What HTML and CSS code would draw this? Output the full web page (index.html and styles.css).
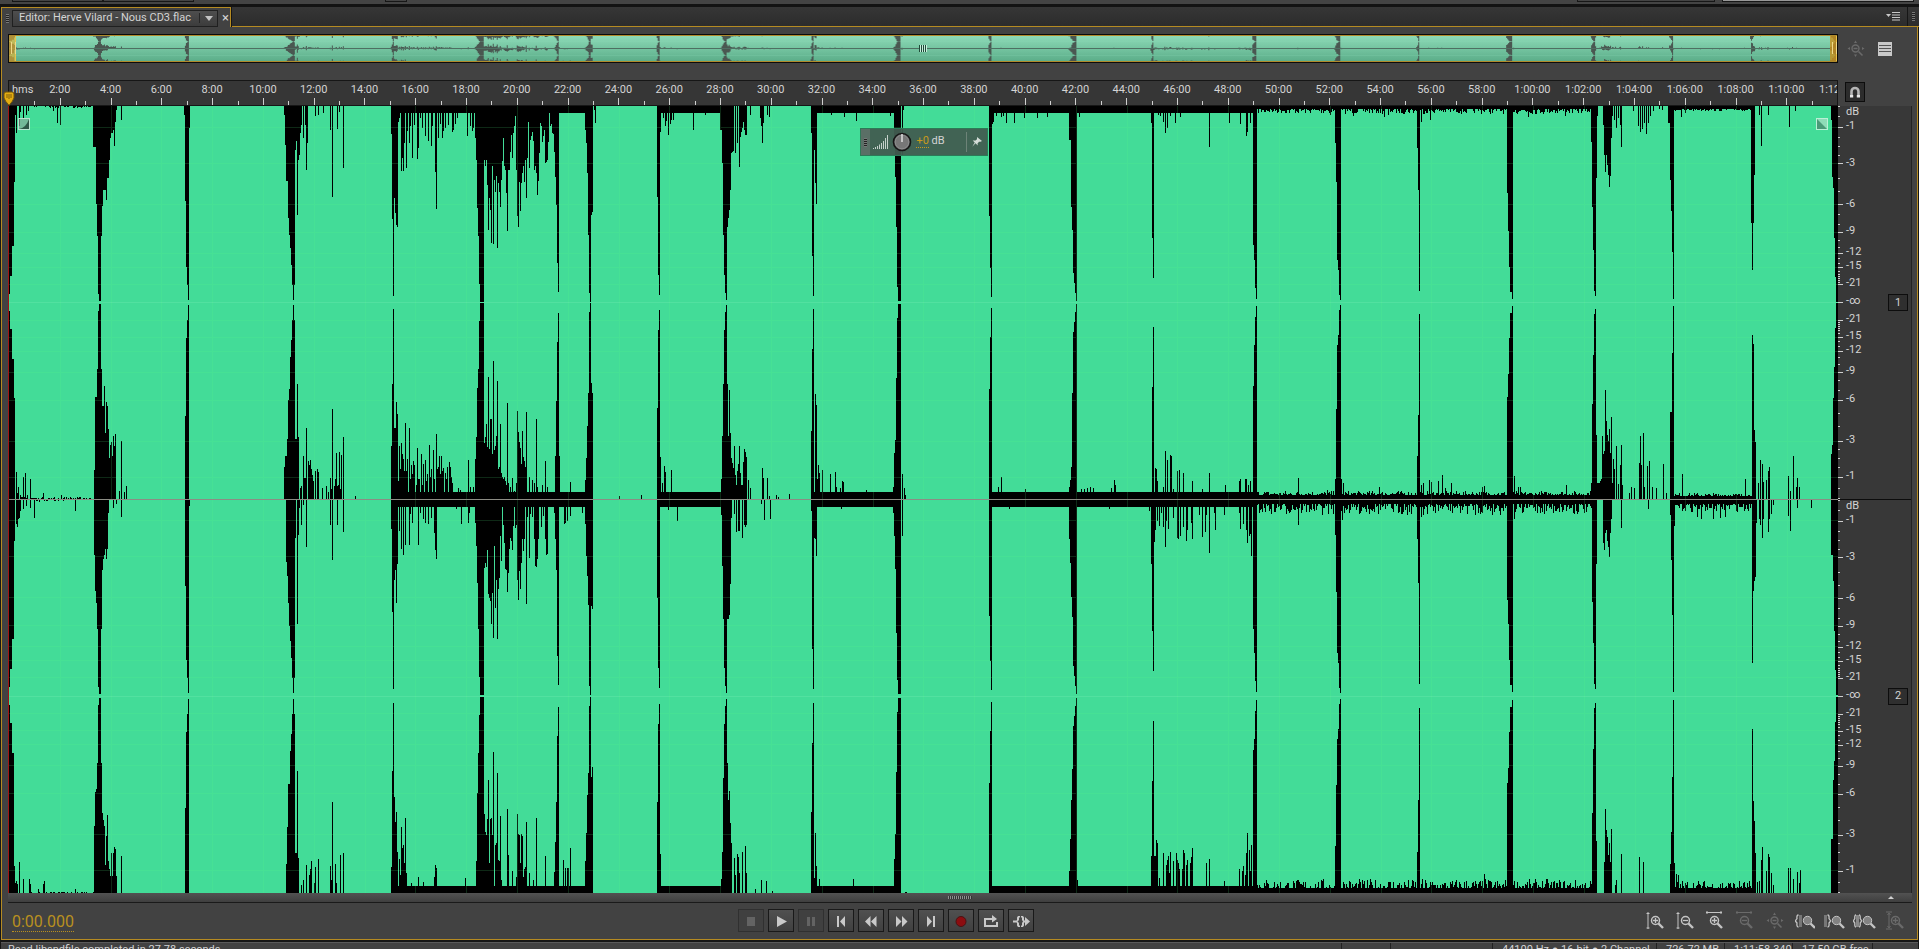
FILE: index.html
```html
<!DOCTYPE html>
<html lang="en">
<head>
<meta charset="utf-8">
<title>Editor: Herve Vilard - Nous CD3.flac</title>
<link rel="stylesheet" href="styles.css">
</head>
<body>
<svg class="defs" aria-hidden="true">
  <symbol id="lens" viewBox="0 0 14 14"><circle cx="5.500" cy="5.500" r="4" fill="none" stroke="currentColor" stroke-width="1.500"/><path d="M8.500 8.500l4.500 4.500" stroke="currentColor" stroke-width="2.400"/></symbol>
  <symbol id="lens-solid" viewBox="0 0 14 14"><circle cx="5.500" cy="5.500" r="4.200" fill="#828282" stroke="currentColor"/><path d="M8.500 8.500l4.500 4.500" stroke="currentColor" stroke-width="2.400"/></symbol>
  <symbol id="zoom-full" viewBox="0 0 18 18"><circle cx="8.500" cy="8.500" r="3.500" fill="none" stroke="currentColor" stroke-width="1.400"/><path d="M6.500 8.500h4M11.500 11.500l4 4" stroke="currentColor" stroke-width="1.600"/><path d="M7 3l1.500-2.500L10 3zM7 14.500h3L8.500 17zM3 7v3L.5 8.500zM15 7v3l2.500-1.500z" fill="currentColor"/></symbol>
</svg>

<div class="upper-edge"><i class="slot slot-a"></i><i class="slot slot-b"></i><i class="slot slot-c"></i><i class="slot slot-d"></i><i class="slot slot-e"></i></div>

<header class="tabs">
  <div class="tab">
    <i class="grip"></i>
    <button class="tab-name" type="button"><span>Editor: Herve Vilard - Nous CD3.flac</span><i class="caret"></i></button>
    <button class="close" type="button" aria-label="Close">×</button>
  </div>
  <div class="tab-rest">
    <button class="menu" type="button" aria-label="Panel menu"><svg width="14" height="9" viewBox="0 0 14 9"><path d="M0 2h5L2.500 5z" fill="#c8c8c8"/><path d="M6 .5h8M6 3h8M6 5.500h8M6 8h8" stroke="#c8c8c8"/></svg></button>
    <span class="tab-end"><i class="grip"></i></span>
  </div>
</header>

<main class="panel">
  <div class="overview-row">
    <div class="overview">
      <svg class="overview-wave" viewBox="9 106 1829 787" preserveAspectRatio="none"><path class="wave-shape"/><path d="M9 499H1838" stroke="#4e6f62" stroke-width="26"/><path d="M9 302H1838M9 696H1838" stroke="#8fdcbb" stroke-opacity=".4" stroke-width="20"/></svg>
      <i class="handle"></i>
      <i class="dots"></i>
      <i class="handle handle-end"></i>
    </div>
    <div class="overview-tools">
      <button class="bare dim" type="button" aria-label="Zoom out full"><svg width="18" height="18"><use href="#zoom-full"/></svg></button>
      <button class="bare" type="button" aria-label="Toggle view"><svg width="14" height="14" viewBox="0 0 14 14"><rect width="14" height="14" fill="#c9c9c9"/><path d="M1 3.500h12M1 6.500h12M1 9.500h12" stroke="#555"/></svg></button>
    </div>
  </div>

  <div class="ruler-row">
    <div class="ruler" id="ruler"><span class="unit">hms</span></div>
    <button class="magnet" type="button" aria-label="Snapping"><svg width="12" height="12" viewBox="0 0 12 12"><path d="M2.500 9V5.500a3.500 3.500 0 0 1 7 0V9" fill="none" stroke="#b5b5b5" stroke-width="2.600"/><path d="M1 9h3.200v2.500H1zM7.800 9H11v2.500H7.800z" fill="#e6e6e6"/></svg></button>
    <svg class="playhead" width="12" height="15" viewBox="0 0 12 15"><path d="M1 3q0-2 2-2h6q2 0 2 2v4q-1 3-5 7.500Q2 10 1 7z" fill="#e3ac12" stroke="#6f520a"/><path d="M4 3v4M6 3v5M8 3v4" stroke="#7c5c0b"/></svg>
  </div>

  <div class="wave-row">
    <div class="wave">
      <svg class="wave-svg" viewBox="9 106 1829 787" preserveAspectRatio="none" shape-rendering="crispEdges">
        <path class="wave-shape"/>
        <path class="grid" id="grid"/>
        <path class="zero" d="M9 302.500H1838M9 696.500H1838"/>
        <path class="divide" d="M9 499H1838"/>
      </svg>
      <svg class="fade" width="12" height="12" viewBox="0 0 12 12"><rect x=".5" y=".5" width="11" height="11" fill="#86aa98" fill-opacity=".7" stroke="#b9e3cf"/><path d="M1 11Q8 10 11 1V11z" fill="#2e5746"/></svg>
      <svg class="fade fade-end" width="12" height="12" viewBox="0 0 12 12"><rect x=".5" y=".5" width="11" height="11" fill="#8edcb8" stroke="#b9f0d6"/><path d="M1 1L11 11H1z" fill="#4a9a78"/></svg>
      <div class="hud">
        <span class="hud-grip"><i class="grip"></i></span>
        <svg width="16" height="14" viewBox="0 0 16 14"><path d="M.5 14v-1M2.500 14v-2M4.500 14v-3M6.500 14v-4.500M8.500 14V8M10.500 14V6M12.500 14V3M14.500 14V0" stroke="#c4d0ca"/></svg>
        <svg width="20" height="20" viewBox="0 0 20 20"><circle cx="10" cy="10" r="8.500" fill="#6c6c6c" stroke="#161616" stroke-width="1.600"/><circle cx="10" cy="10" r="6.800" fill="#777" stroke="#8d8d8d"/><path d="M10 2v8" stroke="#eee" stroke-width="1.300"/></svg>
        <span class="gain"><a href="#gain">+0</a> dB</span>
        <button class="pin" type="button" aria-label="Pin"><svg width="10" height="10" viewBox="0 0 10 10"><path d="M5 0l5 4-1.500.7-1.500 0L5.500 6.500 5.800 8.500 3.500 6.300.3 9.700 2.700 5.500.7 3.500 3.500 3.600 5 2.200z" fill="#d3dcd7"/></svg></button>
      </div>
    </div>
    <div class="scales">
      <div class="scale"><svg class="ticks" viewBox="0 0 5 393" preserveAspectRatio="none" shape-rendering="crispEdges"><path class="tick-path"/></svg><ul class="levels"></ul><button class="channel" type="button">1</button></div>
      <div class="scale"><svg class="ticks" viewBox="0 0 5 393" preserveAspectRatio="none" shape-rendering="crispEdges"><path class="tick-path"/></svg><ul class="levels"></ul><button class="channel" type="button">2</button></div>
    </div>
  </div>

  <div class="splitter"><i class="splitter-grip"></i><i class="splitter-up"></i></div>

  <div class="controls">
    <div class="time"><a href="#time">0:00.000</a></div>
    <div class="transport">
      <button class="key off" type="button" aria-label="Stop"><svg viewBox="0 0 24 20"><path d="M8 6h8v9H8z"/></svg></button>
      <button class="key" type="button" aria-label="Play"><svg viewBox="0 0 24 20"><path d="M8 5l10 5.500L8 16z"/></svg></button>
      <button class="key off" type="button" aria-label="Pause"><svg viewBox="0 0 24 20"><path d="M8 6h3v9H8zM13 6h3v9h-3z"/></svg></button>
      <button class="key" type="button" aria-label="Previous"><svg viewBox="0 0 24 20"><path d="M8 5h2v11H8zM16 5v11l-5-5.500z"/></svg></button>
      <button class="key" type="button" aria-label="Rewind"><svg viewBox="0 0 24 20"><path d="M11.500 5v11L6 10.500zM17.500 5v11L12 10.500z"/></svg></button>
      <button class="key" type="button" aria-label="Fast forward"><svg viewBox="0 0 24 20"><path d="M7 5v11l5.500-5.500zM13 5v11l5.500-5.500z"/></svg></button>
      <button class="key" type="button" aria-label="Next"><svg viewBox="0 0 24 20"><path d="M8 5v11l5-5.500zM14 5h2v11h-2z"/></svg></button>
      <button class="key" type="button" aria-label="Record"><svg viewBox="0 0 24 20"><circle class="rec" cx="12" cy="10.500" r="5"/></svg></button>
      <button class="key" type="button" aria-label="Loop"><svg viewBox="0 0 24 20"><path d="M5 7h8V4l5 4-5 3.500V9H7v5h10v-3h2v5H5z"/></svg></button>
      <button class="key" type="button" aria-label="Skip selection"><svg viewBox="0 0 24 20"><path d="M4 9.500h4v2H4zM9 5h2v1.500h-1V9l-1.500 1.500L10 12v2.500h1V16H9l-1-1.500V12L6.500 10.500 8 9V6.500zM12 5h2l1 1.500V9l1 1.500-1 1.500v2.500L14 16h-2v-1.500h1V12l1-1.500L13 9V6.500h-1zM16 6l5 4.500-5 4.500v-3.500h-1v-2h1z"/></svg></button>
    </div>
    <div class="zooms">
      <button class="bare" type="button" aria-label="Zoom in amplitude"><svg width="18" height="20" viewBox="0 0 18 20"><path d="M2 1v17M.5 2.500h3M.5 17h3" stroke="currentColor" fill="none"/><use href="#lens" x="4" y="4" width="14" height="14"/><path d="M7 9.500h5M9.500 7v5" stroke="currentColor" stroke-width="1.300"/></svg></button>
      <button class="bare" type="button" aria-label="Zoom out amplitude"><svg width="18" height="20" viewBox="0 0 18 20"><path d="M2 1v17M.5 2.500h3M.5 17h3" stroke="currentColor" fill="none"/><use href="#lens" x="4" y="4" width="14" height="14"/><path d="M7 9.500h5" stroke="currentColor" stroke-width="1.300"/></svg></button>
      <button class="bare" type="button" aria-label="Zoom in time"><svg width="20" height="20" viewBox="0 0 20 20"><path d="M1 1.500h16M2 0v3M16 0v3" stroke="currentColor"/><use href="#lens" x="4" y="4" width="14" height="14"/><path d="M7 9.500h5M9.500 7v5" stroke="currentColor" stroke-width="1.300"/></svg></button>
      <button class="bare dim" type="button" aria-label="Zoom out time"><svg width="20" height="20" viewBox="0 0 20 20"><path d="M1 1.500h16M2 0v3M16 0v3" stroke="currentColor"/><use href="#lens" x="4" y="4" width="14" height="14"/><path d="M7 9.500h5" stroke="currentColor" stroke-width="1.300"/></svg></button>
      <button class="bare dim" type="button" aria-label="Zoom out full"><svg width="18" height="18"><use href="#zoom-full"/></svg></button>
      <button class="bare" type="button" aria-label="Zoom to in point"><svg width="20" height="20" viewBox="0 0 20 20"><path d="M3.500 4q-2 0-1.500 3.500L.3 10 2 12q-.5 4 1.500 4" fill="none" stroke="currentColor" stroke-width="1.300"/><path d="M4 4h3v12H4z" fill="#777"/><use href="#lens-solid" x="7" y="4" width="14" height="14"/></svg></button>
      <button class="bare" type="button" aria-label="Zoom to out point"><svg width="22" height="20" viewBox="0 0 22 20"><path d="M0 4h3v12H0z" fill="#777"/><path d="M3.500 4q2 0 1.500 3.500L6.700 10 5 12q.5 4-1.500 4" fill="none" stroke="currentColor" stroke-width="1.300"/><use href="#lens-solid" x="7" y="4" width="14" height="14"/></svg></button>
      <button class="bare" type="button" aria-label="Zoom to selection"><svg width="24" height="20" viewBox="0 0 24 20"><path d="M3 4q-1.500 0-1.200 3.500L.3 10 1.800 12q-.3 4 1.200 4M6 4q1.500 0 1.200 3.500L8.700 10 7.200 12q.3 4-1.200 4" fill="none" stroke="currentColor" stroke-width="1.300"/><path d="M3 4h3v12H3z" fill="#888"/><use href="#lens-solid" x="9" y="4" width="14" height="14"/></svg></button>
      <button class="bare dim" type="button" aria-label="Zoom track"><svg width="18" height="20" viewBox="0 0 18 20"><path d="M3 3v13M0 1h6M0 18h6M1.500 4L3 2l1.500 2M1.500 15L3 17l1.500-2" stroke="currentColor" fill="none"/><use href="#lens" x="4" y="4" width="14" height="14"/><path d="M7 9.500h5M9.500 7v5" stroke="currentColor" stroke-width="1.300"/></svg></button>
    </div>
  </div>
</main>

<footer class="status">
  <span class="message">Read libsndfile completed in 27.78 seconds</span>
  <span class="cell cell-small"></span>
  <span class="cell cell-wide"></span>
  <span class="cell cell-format">44100 Hz ● 16-bit ● 2 Channel</span>
  <span class="cell cell-size">726.72 MB</span>
  <span class="cell cell-size">1:11:58.340</span>
  <span class="cell cell-free">17.50 GB free</span>
  <span class="cell cell-last"></span>
</footer>
<script src="wave.js"></script>
</body>
</html>
```
FILE: styles.css
```css
* { box-sizing: border-box; }
body {
  margin: 0;
  height: 100vh;
  overflow: hidden;
  display: flex;
  flex-direction: column;
  background: #161616;
  color: #d4d4d4;
  font: 11px/14px Roboto, "Open Sans", sans-serif;
}
button { font: inherit; color: inherit; background: none; border: 0; padding: 0; margin: 0; }
svg { display: block; }
ul { list-style: none; margin: 0; padding: 0; }
.defs { position: absolute; width: 0; height: 0; }

.upper-edge { flex: none; height: 7px; background: #444; border-bottom: 3px solid #131313; display: flex; }
.slot { height: 2px; border: solid #171717; border-width: 0 1px 1px; }
.slot-a { width: 91px; margin-left: 12px; }
.slot-b { width: 91px; }
.slot-c { width: 22px; margin-left: 191px; }
.slot-d { width: 138px; margin-left: auto; }
.slot-e { width: 192px; margin: 0 5px 0 7px; background: #999; }

.tabs { flex: none; height: 20px; display: flex; }
.tab {
  margin-left: 1px;
  padding: 1px 2px 0 4px;
  display: flex;
  align-items: center;
  background: #424242;
  border: solid #b58b22;
  border-width: 1px 1px 0;
}
.grip { width: 3px; height: 9px; background: repeating-linear-gradient(#777 0 1px, #222 1px 2px); }
.tab-name {
  height: 17px;
  margin: 0 4px 0 3px;
  padding: 0 0 0 6px;
  display: flex;
  align-items: center;
  background: linear-gradient(#4e4e4e, #3c3c3c);
  border: 1px solid #202020;
}
.caret { width: 18px; height: 10px; margin-left: 8px; border-left: 1px solid #262626; position: relative; }
.caret::after { content: ""; position: absolute; left: 5px; top: 3px; border: 4px solid transparent; border-top: 5px solid #c4c4c4; border-bottom: 0; }
.close { width: 6px; font-size: 13px; line-height: 14px; }
.tab-rest {
  flex: 1;
  margin-left: 1px;
  display: flex;
  justify-content: flex-end;
  align-items: center;
  background: linear-gradient(#363636, #2c2c2c);
  border-bottom: 1px solid #b58b22;
}
.menu { margin-right: 7px; }
.tab-end { height: 19px; padding: 0 4px; border-left: 1px solid #161616; display: flex; align-items: center; }

.panel {
  flex: 1;
  min-height: 0;
  margin: 0 1px 2px;
  padding: 7px 5px 0 6px;
  display: flex;
  flex-direction: column;
  background: #424242;
  border: solid #b58b22;
  border-width: 0 1px 1px;
}
.overview-row, .ruler-row, .wave-row { display: grid; grid-template-columns: minmax(0, 1fr) 74px; }
.overview-row { height: 29px; margin-bottom: 17px; }
.overview {
  position: relative;
  border: 1px solid #0c0c0c;
  background: linear-gradient(#8fdcb9, #5aac88);
  display: flex;
  justify-content: space-between;
  align-items: center;
}
.overview::after { content: ""; position: absolute; inset: 0; border: solid #b08a2a; border-width: 1px 0; }
.overview-wave { position: absolute; inset: 0; width: 100%; height: 100%; }
.overview-wave .wave-shape { fill: #4a5751; }
.handle { position: relative; width: 7px; height: 27px; background: #e0b032aa; border-right: 1px solid #e9c34c; }
.handle::after { content: ""; position: absolute; left: 2px; top: 7px; width: 3px; height: 12px; border: solid #efd98a; border-width: 0 1px; }
.handle-end { background: #c8901ccc; }
.dots { position: relative; width: 8px; height: 7px; background: repeating-linear-gradient(90deg, #1f4a38 0 1px, #c9efdd 1px 2px); }
.overview-tools { display: flex; align-items: center; gap: 13px; padding-left: 9px; }
.bare { color: #c4c4c4; }
.dim { color: #6a6a6a; }

.ruler-row { height: 26px; position: relative; }
.ruler { display: flex; overflow: hidden; background: #363636; border: 1px solid #161616; }
.unit { flex: 0 0 1.389%; padding: 2px 0 0 3px; white-space: nowrap; }
.mark { flex: 0 0 2.778%; padding-top: 2px; display: flex; justify-content: center; position: relative; white-space: nowrap; }
.mark::before, .mark::after { content: ""; position: absolute; bottom: 0; width: 1px; background: #cfcfcf; }
.mark::before { left: 0; height: 4px; }
.mark::after { left: 50%; height: 7px; }
.playhead { position: absolute; left: -5px; bottom: 0; }
.magnet { width: 20px; height: 20px; margin: 2px 0 0 7px; background: #2c2c2c; border: 1px solid #0d0d0d; display: grid; place-items: center; }

.wave-row { flex: 1; min-height: 0; }
.wave { position: relative; min-height: 0; background: #43dc98; border-left: 1px solid #a01414; }
.wave-svg { position: absolute; inset: 0; width: 100%; height: 100%; }
.wave-shape { fill: #000; }
.grid { stroke: #5f8; stroke-opacity: .16; fill: none; }
.zero { stroke: #b4ffd6; stroke-opacity: .14; }
.divide { stroke: #8c8c84; }
.fade { position: absolute; left: 9px; top: 12px; }
.fade-end { left: auto; right: 10px; }
.hud {
  position: absolute;
  left: 46.550%;
  top: 22px;
  width: 128px;
  height: 28px;
  display: flex;
  align-items: center;
  background: #415c50f2;
  border: 1px solid #2c7a58;
}
.hud-grip { align-self: stretch; width: 9px; margin-right: 3px; display: grid; place-items: center; background: #5a6f66; }
.hud svg + svg { margin-left: 3px; }
.gain { margin: 0 auto 2px 4px; white-space: nowrap; }
.gain a { color: #c99a1c; text-decoration: none; border-bottom: 1px dotted #c99a1c; }
.pin { height: 20px; padding: 0 5px; border-left: 1px solid #6d8378; }

.scales { display: grid; grid-template-rows: 1fr 1fr; background: #383838; border-right: 1px solid #222; }
.scale { position: relative; display: flex; min-height: 0; }
.scale + .scale { box-shadow: 0 -1px #0c0c0c; }
.ticks { width: 5px; height: 100%; }
.tick-path { stroke: #cfcfcf; }
.levels { flex: 1; display: flex; flex-direction: column; padding-left: 3px; }
.levels li { flex: 1 1 0; display: flex; align-items: flex-end; line-height: 0; min-height: 0; }
.channel { align-self: center; width: 20px; height: 17px; margin-right: 3px; background: #2f2f2f; border: 1px solid #0d0d0d; }

.splitter { position: relative; height: 10px; display: flex; align-items: center; justify-content: flex-end; background: linear-gradient(#525252, #3f3f3f); border-bottom: 1px solid #1a1a1a; }
.splitter-grip { position: absolute; left: 49.350%; width: 24px; height: 3px; background: repeating-linear-gradient(90deg, #8f8f8f 0 1px, #333 1px 2px); }
.splitter-up { width: 0; height: 0; margin-right: 18px; border: 3px solid transparent; border-bottom-color: #d0d0d0; border-top: 0; }

.controls { flex: none; height: 36px; display: flex; align-items: center; padding-bottom: 1px; }
.time { flex: 0 0 38.350%; padding: 2px 0 0 4px; font-size: 16px; line-height: 17px; }
.time a { color: #b9901f; text-decoration: none; border-bottom: 1px dotted #b9901f; }
.transport { display: flex; gap: 4px; }
.key { width: 26px; height: 23px; display: grid; place-items: center; background: linear-gradient(#505050, #404040); border: 1px solid #191919; }
.key svg { width: 24px; height: 20px; fill: #c9c9c9; }
.off { background: #404040; border-color: #303030; }
.off svg { fill: #636363; }
.key .rec { fill: #8c0d10; stroke: #4b1213; }
.zooms { margin-left: auto; padding-right: 2px; display: flex; }
.zooms .bare { width: 30px; height: 22px; display: grid; place-items: center; }

.status { flex: none; height: 7px; margin: 0 1px; overflow: hidden; display: flex; background: #424242; border-top: 1px solid #5a5a5a; white-space: nowrap; }
.message { flex: 1; padding-left: 7px; }
.cell { border-left: 1px solid #222; padding-left: 9px; min-height: 14px; }
.cell-small { width: 49px; }
.cell-wide { width: 102px; }
.cell-format { width: 164px; }
.cell-size { width: 68px; }
.cell-free { width: 80px; }
.cell-last { width: 46px; }
```
FILE: wave.js
```js
// Each entry is x,depth[,width]: a silent bar reaching from a channel's edge toward its centre.
const gaps = `9,140,5 9,170,3 9,188,1 97,130,5 98,188,3 99,195,2 186,161,3 187,179,2 188,194 290,142,5 291,159,4 292,179,3 293,194
392,113,2 393,190 394,71,2 478,130,6 479,178,5 480,196,4 557,157,2 558,186 588,106,5 589,187,2 590,196
657,91,3 658,169,2 659,189 723,115,5 724,169,3 725,187,2 726,194 812,150,2 813,190 895,59,6 896,121,5 897,181,4 898,195,3
989,110,3 990,162,2 991,191 1072,106,5 1073,167,4 1074,177,3 1075,187,2 1076,195 1152,112,2 1153,172
1253,113,4 1254,154,3 1255,182,2 1256,193 1336,76,5 1337,154,4 1338,164,3 1339,189,2 1340,194 1418,84,2 1419,185
1507,87,6 1508,125,5 1509,161,4 1510,186,3 1512,193 1592,80,4 1593,144,3 1594,185,2 1595,190 1671,61,3 1672,116,2 1673,193
1752,92,2 1752,164 1753,69,2 1832,54,6 1833,82,5 1834,132,4 1835,171,3 1836,196,2`;

const halves = {
  top1: `9,9,7 16,27 9,76,6 19,20 20,6 23,12 26,9 28,5 53,5 57,17 60,19 93,41,3 96,98,4 97,130,4 101,124 102,100 103,84,3 106,94 107,72 108,72 109,54 110,32 111,27,2 113,24 114,40 115,16 116,4 121,14
184,9,6 185,22,5 185,95,4 284,9,12 285,39,11 286,75,9 288,112,7 289,129,6 295,44 296,35 297,109 298,54 299,49 300,27 301,19 303,32 305,19 306,64 307,37 315,10 318,9 323,7 330,24 332,91 337,23 339,6 343,62
391,28,7 394,92 395,107 396,119 397,121 391,7,202 398,16 399,12 401,65 402,52 403,65 404,37 406,62 407,25 409,37 410,20 412,52 414,19 417,53 418,42 420,12 422,22 425,30 428,35 431,40 432,20 435,66 436,103 438,32 440,18 442,32 443,25 445,22 448,19 452,26 453,24 455,18 457,12 467,30 470,20 472,25 473,22 475,32,3 476,54,3 477,102,2
484,54,3 485,60 487,79,2 488,124 489,92 490,104,2 491,137 493,138 492,60 494,74 495,86 496,70 497,142 498,77 499,86 500,101 501,74 502,55 503,32 504,60 505,64 506,87 507,125 508,64,2 510,46 511,29 512,52 513,27 514,20 515,10 516,64 517,110 518,121 519,76 520,105 521,77 522,67 523,60 524,76 525,54 526,92 527,52 528,16 529,62 530,34 531,30 532,26 533,35 534,64 535,60 536,67 537,89 538,75 539,47 540,17 541,20 542,36 543,30 544,24 545,57 546,56 547,54 548,36 550,20 551,18 552,27 553,28 554,46 555,71 556,99
585,24 586,37 587,67 588,129 591,109 592,97 594,4 595,17 657,26,4 657,7,66 658,105,2 663,12 665,20 666,15 668,29 670,18 671,14 673,14 693,24 705,9 720,24,10 722,57,9 723,129,4 727,121 728,112 729,104 730,84 731,47 732,46 733,45 735,47 737,37 739,61 740,31 741,26 742,22 743,16 744,24 745,29,2 750,9 760,12 761,20 762,37 763,17 767,9 769,11
811,7,85 811,27,4 814,44 815,77 816,98 831,9 844,11 856,15 890,10 894,37 895,71 902,50 903,4 989,7,268 992,18 993,16 996,10 1001,11 1003,10 1006,17 1014,17 1024,12 1037,12 1047,11
1069,34,8 1071,101,6 1072,124,5 1079,11 1151,17,3 1152,132,2 1158,9 1160,10 1163,16 1165,27 1167,22 1170,10 1175,17 1180,11 1209,41 1229,17 1240,18 1246,30 1247,26 1250,17 1253,139,4 1257,3,335
1330,9 1335,37,6 1353,10 1384,11 1388,9 1417,42,3 1421,16 1430,14 1528,11 1565,10 1591,36,5 1592,101,4 1596,72 1597,10 1603,19,8 1604,49,7 1605,66 1607,59 1608,69 1609,81 1610,70 1611,32 1612,10 1614,14 1616,22 1618,12 1620,19 1621,41 1633,5 1638,20 1640,26 1642,23 1644,17 1646,28 1648,17 1650,10 1653,5 1659,3 1662,4
1668,17,6 1670,74,4 1671,105,3 1672,146,2 1674,3,78 1681,11 1685,7 1751,117,3 1754,64 1759,9 1761,40 1768,9 1789,21 1795,5 1831,14,7 1832,71,6`,
  bottom1: `9,101,6 16,27 17,6 18,12 20,4 23,22 25,26 27,4 30,20 43,6 61,4 94,29,22 95,102,7 101,115 102,93 103,93 104,113 105,66 106,97 107,93 108,70 109,41 110,54 111,57 112,43 113,63 114,53 115,65 119,8 121,58 124,7 126,13
185,83,4 284,32,15 285,43,13 287,60,11 288,99,7 289,110,6 297,115 298,62 300,11 301,13 303,43 304,21,2 306,71 308,38 309,34 310,39 311,30 312,24 313,18 315,28 317,30 318,27 322,11 326,13 328,7 330,21 331,10 332,90 334,13 335,20 336,46 337,13 338,14 339,47 340,10 341,44 343,62 355,3
391,7,202 391,53,3 392,115 394,71,2 396,97 397,85 398,18 399,53 400,30 401,56 402,45 403,40 404,28 405,76 406,28 407,40 409,71 410,20 411,34 412,25 413,38 414,34 416,14 417,51 418,20 419,20 421,45 422,14 423,35 425,39 426,18 427,25 429,54 430,22 431,30 433,49 434,20 436,65 437,30 438,32 439,43 440,25 441,43 442,28 443,31 445,26 446,20 447,32 449,37 450,32 452,16 451,22 458,11 460,9 468,39 470,12 473,12
475,40,9 476,62,8 477,111,7 484,56 485,62 486,75 487,52 488,122 489,50 490,80 491,80 492,45 493,138 494,49 495,53 496,63 497,118 498,30 499,32 500,75 501,26 502,22 503,20 504,22 505,18 506,14 507,96 508,16 510,12 512,21 514,8 516,16 517,88 518,67 519,57 520,51 521,35 522,68 523,42 524,38 525,32 526,87 529,22 532,19 534,16 536,80 537,12 542,14 545,38 547,12 555,43,5 556,98,3 570,17 585,19,8 586,41,7 587,73,6 591,116 592,96 619,3 641,4
657,7,68 660,42 662,16 664,33 665,27 671,29 721,20,10 722,63,8 729,109 730,66 731,41 732,36 733,31 731,14,16 734,53 735,24 737,28 738,35 739,53 740,26 743,37 744,50 745,47 746,42 748,19 750,11 762,31 763,21 767,21 769,3 776,4 778,2 789,5
811,68,3 815,105 816,94 817,20 818,34 819,26 811,7,90 822,29 830,25 835,27 836,12 840,11 842,18 843,17 866,9 893,12,8 894,46,7 902,25 904,11 905,4 989,7,268 998,12 1001,22 1025,10 1069,12,8 1070,19,7 1071,32,6 1081,10 1084,10 1087,11 1090,12 1093,11 1111,11 1114,19 1115,14
1155,31 1156,30 1157,18 1163,12 1165,48 1167,39 1170,44 1171,43 1173,10 1177,28 1179,29 1183,26 1192,18 1202,10 1209,26 1225,14 1239,18 1240,20 1245,20 1246,20 1248,14 1250,18 1257,4,335 1298,21 1327,9 1335,20,7 1336,90,5 1343,16 1379,12 1417,43,3 1421,14 1423,16 1429,19 1431,17 1438,18 1442,24 1445,11 1451,16 1482,12 1484,13 1507,102,6 1514,23 1518,12 1520,12 1566,14
1591,16,22 1592,95,4 1596,64 1600,18 1601,20 1602,63 1603,45 1604,48 1605,109 1606,78 1607,64 1608,58 1609,70 1610,46 1611,82 1613,40 1614,30 1616,53 1618,15 1620,34 1621,54 1622,14 1629,6 1631,12 1634,11 1639,36 1640,63 1641,34 1643,66 1644,12 1647,33 1649,38 1652,12 1656,11 1663,35 1666,6 1670,87,4 1672,146,2 1674,3,78 1682,25 1745,20 1752,98,2 1753,155 1754,62 1755,57 1758,16 1760,39 1762,35 1763,17 1766,19 1768,28 1769,32 1788,23 1790,8 1793,43 1796,12 1797,21 1799,12 1831,45,7 1833,101,5`,
  top2: `9,42,6 16,25 17,28 18,20 19,19 20,12 23,10 26,7 30,9 34,19 39,3 75,12 94,50,14 94,56,11 95,92,7 96,104,6 101,94 102,71 103,60 106,60 108,14 113,9 116,5 121,18
185,7,5 185,87,4 286,63,9 287,77,8 288,104,7 289,127,6 295,39 297,125 298,36 299,9 301,26 303,6 306,48 330,26 332,61 337,26 343,33 391,8,202 391,30,7 392,104,2 394,81 395,51 396,104 397,65 399,32 401,50 403,56 405,46 409,46 410,15 412,24 418,46 420,14 423,20 425,24 428,25 431,19 434,34 435,51 436,60 456,10 461,25 468,24 469,14
475,24,9 476,47,8 477,84,7 484,69 485,64 486,68 487,51 488,95 489,99 490,102 491,125 492,94 493,139 494,47 495,109 496,81 497,140 498,90 499,79 500,37 501,62 503,26 504,44 505,70 506,71 507,93 508,74 509,50 510,39 511,42 512,51 513,27 515,29 516,26 517,81 518,101 519,72 520,90 521,64 522,40 523,52 524,40 526,105 527,18 529,59 530,15 532,18 534,40 535,67 536,68 537,60 538,40 541,28 543,17 545,40 546,56 547,55 554,14 555,40 556,71 557,96 564,25 565,24 567,22 570,17 582,14 585,25 586,57,7 587,77,6 591,107 592,110
657,8,66 657,99,3 668,11 677,22 721,16,11 722,67,9 723,120,6 728,104 729,116 730,85 731,19 734,15 736,33 738,32 739,32 742,39 744,26 745,28 746,26 761,5 764,21 770,20 811,8,90 811,12,4 814,39 812,103,2 815,40 816,57 841,10 893,14 894,37,7 895,70,6 896,134,5 902,37
989,8,268 989,117,3 1009,10 1069,40,8 1070,64,7 1071,98,6 1072,118,5 1109,10 1149,12 1151,65,3 1152,132,2 1154,43 1155,31 1157,22 1159,27 1161,14 1163,28 1165,48 1166,22 1168,30 1173,19 1177,39 1178,40 1180,37 1183,28 1186,42 1187,31 1191,24 1192,40 1199,16 1202,38 1205,33 1206,16 1209,54 1214,14 1215,31 1224,16 1239,14 1240,30 1243,25 1246,31 1247,44 1249,37 1250,35 1251,57 1253,130,4
1257,5,335 1298,26 1335,36,6 1336,93,5 1342,21 1417,40,3 1421,18 1427,15 1507,101,6 1514,20 1522,14 1592,103,4 1596,65 1603,44 1604,51 1605,34 1606,31 1607,42 1608,48 1609,58 1610,34 1611,20 1621,29 1648,10 1670,16,4 1674,27 1674,5,78 1697,18 1701,20 1713,20 1720,19 1725,18 1754,82 1755,78 1756,24 1759,20 1760,26 1762,39 1763,20 1768,33 1769,20 1771,15 1773,6 1788,17 1790,32 1797,9 1811,9 1831,56,7`,
  bottom2: `9,131,5 14,27 15,10 16,12 17,9 19,31 23,14 29,14 30,9 38,4 43,9 44,12 75,4 94,17,23 94,67,11 95,101,7 96,104,6 101,90 102,80 103,73 104,43 105,28 106,57 107,78 108,32 109,24 111,40 113,40 114,46 115,44 121,37
185,85,4 286,29,13 287,66,8 288,109,7 290,137,5 295,40,3 297,122 298,35 301,8 303,13 306,28 309,18 310,24 311,32 314,10 315,26 318,34 330,27 331,13 332,91 335,29 336,10 340,38 343,40 391,7,202 391,26,7 392,122,2 394,96 395,51 396,81 397,41 399,34 400,18 401,66 402,45 403,48 404,30 405,75 406,20 411,10 418,16 423,11 434,16 435,28 436,25 465,15
476,32,9 477,100,7 478,140,6 484,79 485,61 486,58 487,74 488,113 490,74 491,75 492,58 489,30 493,141 495,48 496,50 497,120 498,33 499,32 500,77 501,13 507,84 508,38 512,22 516,16 517,79 518,59 519,58 520,30 521,59 522,57 523,16 524,24 525,26 526,71 529,20 533,13 536,75 545,37 554,21 555,51 556,91 557,139 563,33 565,25 567,25 568,25 570,45 585,32 586,60 587,98 588,120 591,116 592,126
657,7,67 660,39 721,14,10 722,41,9 723,115,5 727,130 728,93 729,102 730,70 731,50 734,35 735,18 737,39 738,36 739,20 742,41 745,47 746,20 755,4 761,13 766,12 772,2 811,7,90 811,81,3 812,135,2 814,15 815,60 816,27 819,14 853,14 894,34,7 895,39 896,102,5 905,1,2
989,7,268 989,106,3 1069,22,8 1070,54,7 1071,93,6 1072,124,5 1077,13 1151,37,7 1156,53 1157,50 1159,15 1163,40 1166,28 1167,33 1168,37 1169,20 1170,41 1173,32 1176,40 1177,33 1178,30 1179,24 1182,24 1183,43 1184,40 1187,33 1186,28 1190,30 1191,36 1192,45 1206,30 1209,34 1224,12 1239,24 1242,22 1243,27 1245,18 1246,40 1247,60 1249,43 1251,48 1250,22 1253,143,4
1257,5,335 1335,47,6 1336,108,5 1417,41,3 1418,93,2 1484,19 1507,110,6 1596,52 1604,31,7 1605,84 1606,63 1607,56 1608,38 1609,50 1611,64 1615,8 1616,13 1621,39 1639,36 1643,31 1670,29,4 1671,49,3 1674,30 1676,19 1678,18 1674,5,78 1754,72 1755,40 1757,11 1759,12 1761,33 1762,46 1766,22 1768,39 1769,36 1771,20 1773,8 1788,25 1790,25 1793,14 1797,21 1799,10 1800,23 1831,54,7 1833,113,5`
};

const bars = text => text.trim().split(/\s+/).map(item => item.split(',').map(Number));

// Ragged edge of the clipped passages; a fixed generator keeps it the same on every load.
let seed = 7;
const random = () => (seed = (seed * 16807) % 2147483647) / 2147483647;
const ragged = (from, to, base, extra) => {
  const list = [];
  for (let x = from; x < to; x++) list.push([x, Math.round(base + Math.pow(random(), 2) * extra), 1]);
  return list;
};
halves.top1 = bars(gaps + ' ' + halves.top1).concat(ragged(1257, 1592, 3, 5), ragged(1674, 1751, 3, 2), ragged(34, 92, 0, 2));
halves.bottom1 = bars(gaps + ' ' + halves.bottom1).concat(ragged(1257, 1592, 4, 4), ragged(1674, 1751, 3, 3), ragged(18, 94, 0, 2));
halves.top2 = bars(gaps + ' ' + halves.top2).concat(ragged(1257, 1592, 5, 11), ragged(1674, 1751, 5, 8), ragged(30, 94, 0, 2));
halves.bottom2 = bars(gaps + ' ' + halves.bottom2).concat(ragged(1257, 1592, 4, 10), ragged(1674, 1751, 4, 9), ragged(30, 94, 0, 1));

const draw = (list, edge, dir) => list.map(([x, d, w = 1]) => dir > 0
  ? `M${x} ${edge}h${w}v${d}h${-w}z`
  : `M${x} ${edge - d}h${w}v${d}h${-w}z`).join('');
const shape = draw(halves.top1, 106, 1) + draw(halves.bottom1, 499, -1) + draw(halves.top2, 499, 1) + draw(halves.bottom2, 893, -1);
document.querySelectorAll('.wave-shape').forEach(path => path.setAttribute('d', shape));

// Time ruler, one mark every two minutes.
const ruler = document.getElementById('ruler');
const pitch = 50.8;
let grid = '';
for (let i = 1; i <= 36; i++) {
  const minutes = i * 2;
  const label = document.createElement('span');
  label.className = 'mark';
  label.textContent = minutes < 60 ? `${minutes}:00` : `1:${String(minutes - 60).padStart(2, '0')}:00`;
  ruler.append(label);
  grid += `M${Math.round(9 + i * pitch) + .5} 106V893`;
}

// Decibel scale, measured from the top of a channel.
const levels = [['dB', 6], [-1, 20], [-3, 57], [-6, 98], [-9, 125], [-12, 146], [-15, 160], [-21, 177], ['-∞', 195],
  [-21, 213], [-15, 230], [-12, 244], [-9, 265], [-6, 293], [-3, 334], [-1, 370], ['', 393]];
const minor = [0, 10, 31, 40, 49, 72, 85, 108, 118, 134, 141, 152, 157, 165, 168, 170, 172, 174, 176];
const major = [21, 57, 98, 126, 147, 161, 178];
let ticks = 'M0 196.5h5';
major.forEach(y => {
  ticks += `M0 ${y + .5}h5M0 ${392.5 - y}h5`;
  [106, 499].forEach(top => { grid += `M9 ${top + y + .5}H1838M9 ${top + 392.5 - y}H1838`; });
});
minor.forEach(y => { ticks += `M0 ${y + .5}h2M0 ${392.5 - y}h2`; });
document.getElementById('grid').setAttribute('d', grid);
document.querySelectorAll('.tick-path').forEach(path => path.setAttribute('d', ticks));
document.querySelectorAll('.levels').forEach(list => {
  let last = 0;
  levels.forEach(([name, y]) => {
    const item = document.createElement('li');
    item.textContent = name;
    item.style.flexGrow = y - last;
    list.append(item);
    last = y;
  });
});
```
